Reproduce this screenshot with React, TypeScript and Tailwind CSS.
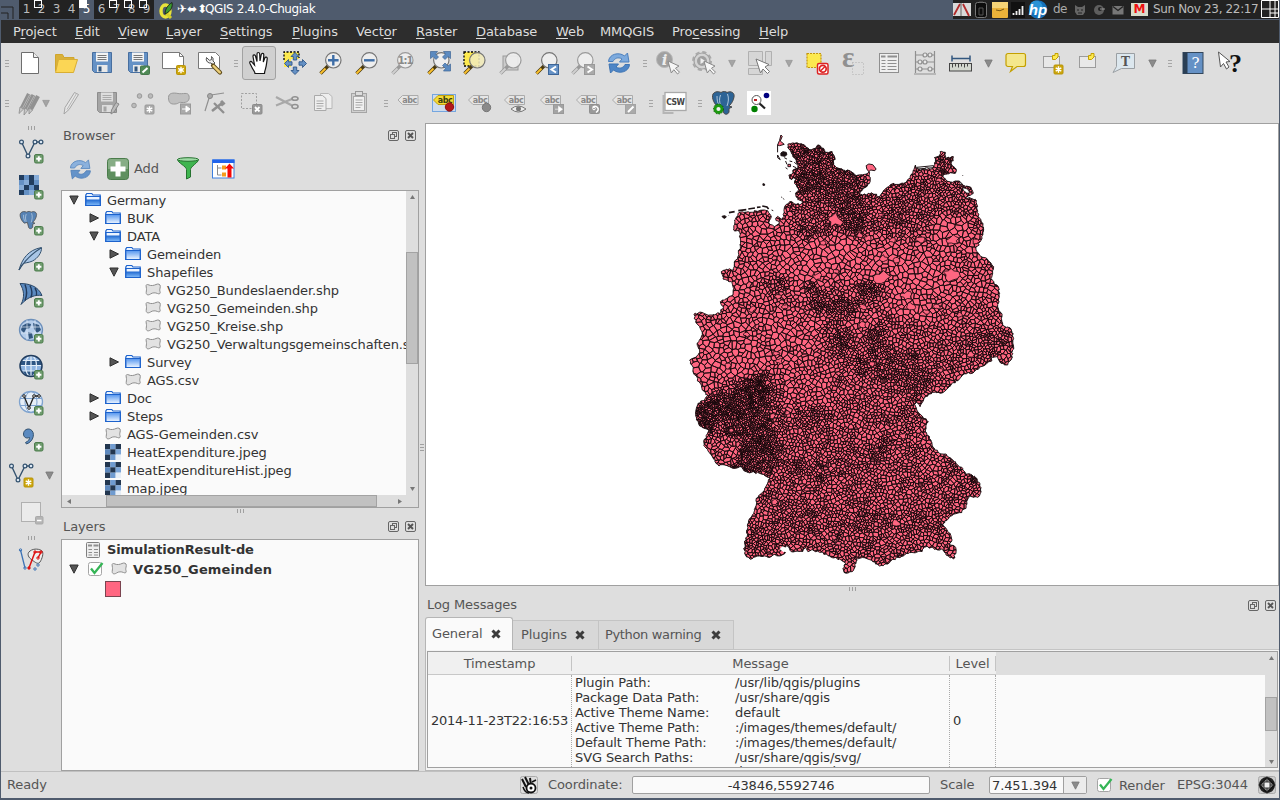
import React from "react";

/* ---------- map geometry ---------- */

const OUTLINE: number[] = [
  325,57,345,55,375,60,395,75,418,60,432,70,437,82,458,80,465,95,462,118,470,127,490,135,512,138,530,152,
  555,148,568,140,570,142,572,170,552,190,540,206,560,210,575,203,600,215,605,208,618,192,635,178,672,175,692,160,
  700,145,708,120,715,132,735,134,760,130,768,110,765,98,780,92,782,80,798,82,800,100,822,95,815,115,830,132,828,145,
  812,143,790,152,800,165,820,172,840,168,850,180,870,185,882,205,868,212,858,218,888,223,893,240,893,262,905,285,
  913,315,905,345,890,375,900,388,922,400,943,425,940,445,935,460,945,478,957,485,960,515,955,545,968,575,970,600,
  995,612,1003,640,1000,675,995,705,985,720,965,715,955,695,932,693,938,707,905,725,885,740,850,750,835,767,820,773,
  805,790,790,803,760,802,735,817,722,845,715,835,705,827,712,855,730,875,747,890,738,915,750,940,765,970,780,985,
  800,987,815,1000,850,1030,858,1047,885,1053,902,1075,903,1105,895,1117,870,1112,862,1130,860,1150,840,1163,810,1175,
  790,1197,812,1225,818,1245,810,1257,825,1263,830,1280,822,1302,800,1290,790,1273,775,1275,755,1267,735,1267,728,1280,
  690,1283,665,1295,640,1303,625,1317,600,1323,580,1310,560,1300,530,1300,530,1315,518,1340,500,1345,490,1330,
  498,1315,485,1305,455,1297,440,1287,420,1282,395,1275,385,1280,378,1264,370,1279,335,1280,320,1262,300,1275,318,1283,
  300,1293,280,1290,265,1297,240,1293,212,1303,195,1285,195,1255,203,1235,203,1200,218,1170,228,1145,230,1120,255,1095,
  272,1060,240,1045,200,1040,185,1025,160,1030,135,1020,118,1023,95,990,75,965,72,950,88,915,60,903,50,885,48,860,
  55,835,75,825,85,810,68,795,58,770,45,750,40,735,30,705,48,697,60,675,52,655,68,630,60,605,48,590,43,568,65,562,
  90,570,120,565,132,545,122,530,160,510,162,490,155,470,130,462,125,440,140,433,162,435,168,405,178,390,182,340,
  180,320,162,315,165,285,180,262,210,262,255,255,265,258,275,275,268,295,285,305,300,295,288,280,294,274,310,285,
  315,245,330,230,360,240,370,230,355,225,348,205,358,195,345,175,350,162,330,160,328,150,340,145,340,135,355,128,
  350,105,340,95,328,72,
];

/* cx, cy, rx, ry, spacing */
const ZONES: number[][] = [
  [240, 430, 130, 150, 11.5], [150, 690, 130, 120, 12.5], [330, 760, 130, 120, 10.5], [440, 390, 90, 80, 13],
  [610, 430, 110, 80, 13], [740, 480, 110, 110, 13], [820, 330, 60, 60, 13], [300, 590, 120, 90, 11.5],
  [900, 500, 60, 90, 10], [540, 560, 50, 80, 10], [850, 600, 110, 60, 9],
  [300, 480, 60, 14, 6.5], [400, 490, 30, 20, 4.8], [450, 550, 60, 26, 4.8], [560, 500, 40, 40, 5.2],
  [485, 640, 40, 40, 5.2], [600, 650, 40, 30, 5.2], [900, 655, 80, 40, 6.2],
  [640, 260, 80, 70, 6.8], [760, 220, 120, 60, 6.4], [870, 190, 40, 30, 5], [800, 120, 40, 40, 5],
  [405, 110, 75, 70, 4.3], [430, 190, 85, 60, 4.5], [500, 210, 60, 70, 4.5], [400, 255, 70, 40, 6.2], [515, 280, 45, 60, 4.7],
  [420, 320, 60, 20, 6], [640, 725, 70, 50, 4.9], [540, 700, 70, 40, 6], [700, 760, 60, 40, 5.8],
  [190, 860, 90, 80, 3.7], [235, 790, 36, 42, 3.2], [80, 870, 36, 42, 3.3], [240, 960, 60, 70, 3.8],
  [215, 1025, 60, 25, 4.2], [130, 985, 44, 36, 9], [400, 870, 55, 30, 5.2], [610, 970, 28, 22, 4.2],
  [700, 865, 45, 30, 5.4], [885, 1065, 20, 14, 3.4], [380, 1040, 60, 30, 6.2], [240, 1250, 50, 40, 6],
  [420, 1200, 120, 50, 6.8], [740, 1180, 80, 40, 6.8], [560, 1180, 60, 40, 6.6], [300, 860, 20, 80, 7],
];

/* larger municipalities: cx, cy, radius */
const CITIES: number[][] = [
  [465, 285, 26], [815, 448, 28], [605, 458, 26], [682, 512, 19], [692, 545, 16], [820, 345, 19], [412, 455, 15],
  [218, 552, 13], [295, 515, 12], [315, 545, 10], [724, 345, 15], [780, 165, 10], [145, 720, 14], [290, 685, 11],
  [298, 708, 11], [578, 716, 12], [874, 690, 13], [782, 735, 9], [280, 873, 10], [324, 863, 9], [155, 915, 8],
  [382, 1093, 9], [650, 1193, 14], [286, 1130, 11], [592, 975, 9], [465, 1238, 9], [362, 1183, 8], [670, 933, 11],
  [478, 1255, 9], [638, 1030, 8], [606, 270, 8], [745, 210, 6], [550, 545, 13], [548, 600, 12], [202, 628, 11],
  [840, 570, 9], [740, 560, 11], [770, 545, 11], [610, 400, 14], [650, 405, 12], [470, 440, 9], [232, 605, 9],
  [540, 330, 11], [565, 340, 12], [890, 350, 12], [640, 345, 10], [430, 355, 10],
];

const makeRandom = (seed: number) => () => {
  seed = (seed * 1664525 + 1013904223) >>> 0;
  return seed / 4294967296;
};

const hash = (a: number, b: number) => {
  let h = (a * 374761393 + b * 668265263) | 0;
  h = Math.imul(h ^ (h >>> 13), 1274126177);
  return ((h ^ (h >>> 16)) >>> 0) / 4294967296;
};

function noise(x: number, y: number): number {
  const i = Math.floor(x), j = Math.floor(y);
  const u = x - i, v = y - j;
  const a = hash(i, j) + (hash(i + 1, j) - hash(i, j)) * u;
  const b = hash(i, j + 1) + (hash(i + 1, j + 1) - hash(i, j + 1)) * u;
  return a + (b - a) * v;
}

function roughen(src: number[]): string {
  const rnd = makeRandom(77);
  const n = src.length / 2;
  let d = "";
  for (let i = 0; i < n; i++) {
    const x1 = src[2 * i], y1 = src[2 * i + 1];
    const j = (i + 1) % n;
    const x2 = src[2 * j], y2 = src[2 * j + 1];
    const len = Math.hypot(x2 - x1, y2 - y1);
    const parts = Math.max(1, Math.round(len / 6));
    for (let k = 0; k < parts; k++) {
      const t = k / parts;
      const a = k === 0 ? 0 : 6;
      const x = x1 + (x2 - x1) * t + (rnd() - 0.5) * a;
      const y = y1 + (y2 - y1) * t + (rnd() - 0.5) * a;
      d += (d ? "L" : "M") + x.toFixed(1) + " " + y.toFixed(1);
    }
  }
  return d + "Z";
}

function spacingAt(x: number, y: number): number {
  const wx = x + (noise(x / 22, y / 22) - 0.5) * 50;
  const wy = y + (noise(x / 22 + 90, y / 22) - 0.5) * 50;
  let r = 7.8;
  for (const z of ZONES) {
    const q = Math.hypot((wx - z[0]) / z[2], (wy - z[1]) / z[3]);
    if (q < 1.25) {
      const w = Math.min(1, (1.25 - q) / 0.4);
      r += (z[4] - r) * w;
    }
  }
  return r * (0.55 + noise(x / 11 + 300, y / 11) * 0.95);
}

function buildCells(): string {
  const rnd = makeRandom(4242);
  const G = 12;
  const X0 = 20, Y0 = 45, W = 1000, H = 1310;
  const cols = Math.ceil(W / G), rows = Math.ceil(H / G);
  const grid: number[][] = Array.from({ length: cols * rows }, () => []);
  const px: number[] = [], py: number[] = [];
  const around = (x: number, y: number, rad: number, fn: (i: number) => boolean) => {
    const c0 = Math.max(0, Math.floor((x - rad - X0) / G)), c1 = Math.min(cols - 1, Math.floor((x + rad - X0) / G));
    const r0 = Math.max(0, Math.floor((y - rad - Y0) / G)), r1 = Math.min(rows - 1, Math.floor((y + rad - Y0) / G));
    for (let r = r0; r <= r1; r++)
      for (let c = c0; c <= c1; c++)
        for (const i of grid[r * cols + c]) if (fn(i)) return true;
    return false;
  };
  for (let k = 0; k < 130000; k++) {
    const x = X0 + rnd() * W, y = Y0 + rnd() * H;
    const r = spacingAt(x, y) * (0.88 + rnd() * 0.3);
    if (around(x, y, r, (i) => Math.hypot(px[i] - x, py[i] - y) < r)) continue;
    grid[Math.floor((y - Y0) / G) * cols + Math.floor((x - X0) / G)].push(px.length);
    px.push(x); py.push(y);
  }
  const out: string[] = [];
  for (let i = 0; i < px.length; i++) {
    const x = px[i], y = py[i];
    const b = spacingAt(x, y) * 1.6 + 5;
    let poly = [[-b, -b], [b, -b], [b, b], [-b, b]];
    const near: number[][] = [];
    around(x, y, b * 1.8, (j) => {
      if (j !== i) {
        const dx = px[j] - x, dy = py[j] - y;
        near.push([dx, dy, dx * dx + dy * dy]);
      }
      return false;
    });
    near.sort((p, q) => p[2] - q[2]);
    for (const [dx, dy, d2] of near) {
      let far = 0;
      for (const p of poly) far = Math.max(far, p[0] * p[0] + p[1] * p[1]);
      if (d2 > far * 4) break;
      const next: number[][] = [];
      for (let a = 0; a < poly.length; a++) {
        const p = poly[a], q = poly[(a + 1) % poly.length];
        const sp = p[0] * dx + p[1] * dy - d2 / 2, sq = q[0] * dx + q[1] * dy - d2 / 2;
        if (sp <= 0) next.push(p);
        if (sp <= 0 !== sq <= 0) {
          const t = sp / (sp - sq);
          next.push([p[0] + (q[0] - p[0]) * t, p[1] + (q[1] - p[1]) * t]);
        }
      }
      poly = next;
    }
    if (poly.length > 2) {
      const warped = poly.map((p) => {
        const vx = p[0] + x, vy = p[1] + y;
        return (vx + (noise(vx / 6, vy / 6) - 0.5) * 7).toFixed(1) + " " + (vy + (noise(vx / 6 + 50, vy / 6 + 50) - 0.5) * 7).toFixed(1);
      });
      out.push("M" + warped.join("L") + "Z");
    }
  }
  return out.join("");
}

function cityPath(): string {
  const rnd = makeRandom(9);
  return CITIES.map(([x, y, r]) => {
    const n = 11;
    const rot = rnd() * 6;
    let d = "";
    for (let k = 0; k < n; k++) {
      const a = (k / n) * Math.PI * 2 + rot;
      const q = r * (0.5 + rnd() * 0.65);
      d += (k ? "L" : "M") + (x + Math.cos(a) * q).toFixed(1) + " " + (y + Math.sin(a) * q * 0.8).toFixed(1);
    }
    return d + "Z";
  }).join("");
}

const outlinePath = roughen(OUTLINE);
const cellPath = buildCells();
const cities = cityPath();

function GermanyMap() {
  return (
    <svg className="block h-full w-full" viewBox="-762 -3 2559 1383" preserveAspectRatio="none">
      <defs>
        <clipPath id="land"><path d={outlinePath} /></clipPath>
      </defs>
      <g clipPath="url(#land)">
        <rect x="0" y="0" width="1100" height="1380" fill="#ff6681" />
        <path d={cellPath} fill="none" stroke="#1a0a0e" strokeWidth="2.6" />
        <path d={cities} fill="#ff6681" stroke="#1a0a0e" strokeWidth="2.5" />
      </g>
      <path d={outlinePath} fill="none" stroke="#1c1214" strokeWidth="2.8" />
      <g fill="#ff6681" stroke="#1c1214" strokeWidth="3">
        <path d="M560 122L568 117L580 119L590 132L586 137L574 135L568 140L562 132Z" />
        <path d="M304 30L308 34L302 48L314 58L300 62L294 60L300 46Z" />
        <path d="M294 60V82M294 90L302 104L294 98ZM712 127L762 122L763 128L716 132Z" fill="none" />
        <path d="M325 118l8 0 0 7-8 0Z" />
      </g>
      <g fill="#1c1214" stroke="#1c1214" strokeWidth="3">
        <path d="M304 84l6-4 10 2 2 7-6 5-12-2Z M314 98l8 4 M318 108l4 10 M330 108l8 2 M318 128l6 4 M344 112l8 6 M340 124l10 4 M250 176l5 1 0 4-5 0Z M305 216l3 2 M311 221l3 2 M332 198v2 M850 150v2 M276 255l5 2" />
        <path d="M127 274l8-2 5 3-4 5-6-2Z M147 272v1" />
        <path d="M148 263L165 260M176 257L200 254M206 252L226 249M232 247L243 246M248 243L262 246L267 252" strokeWidth="5" fill="none" />
      </g>
      <g fill="#fff" stroke="#1c1214" strokeWidth="2">
        <path d="M850 188l14 4 8 12-10 0-10-8Z M738 128l8 0 0 5-8 0Z M843 172l5 5-8 1Z" />
        <path d="M300 1272l8-8 12 4 6 8-14 6Z" stroke="none" />
      </g>
    </svg>
  );
}

/* ---------- icons ---------- */

type P = { children?: React.ReactNode; w?: number; h?: number };
const Ic = ({ children, w = 24, h = 24 }: P) => (
  <svg width={w} height={h} viewBox={`0 0 ${w} ${h}`} className="block shrink-0 overflow-visible tracking-normal" fill="none">
    {children}
  </svg>
);

const Plus = () => (
  <g>
    <rect x="15.500" y="15.500" width="8.500" height="8.500" rx="1.500" fill="#6f9b6e" stroke="#4b7c4b" />
    <path d="M19.800 17.200v5.200M17.200 19.800h5.200" stroke="#fff" strokeWidth="1.900" />
  </g>
);
const Star = ({ x = 14, y = 14, g = false }: { x?: number; y?: number; g?: boolean }) => (
  <g transform={`translate(${x} ${y})`}>
    <rect x=".5" y=".5" width="9" height="9" rx="1" fill={g ? "#a9a9a9" : "#cda60b"} stroke={g ? "#9b9b9b" : "#b8940a"} />
    <path d="M5 1.800v6.400M2.200 3.400l5.600 3.200M7.800 3.400L2.200 6.600" stroke="#fff" strokeWidth="1.400" />
  </g>
);

const NewDoc = () => (
  <Ic><path d="M3.500 1.500h12l5 5v16h-17z" fill="#fff" stroke="#6e6e6e" /><path d="M15.500 1.500v5h5" fill="#eee" stroke="#6e6e6e" /></Ic>
);
const Open = () => (
  <Ic>
    <path d="M1.500 20V3.500h7l1.500 3h10V9" fill="#d9b13a" stroke="#d0a52c" />
    <path d="M1.500 21.500L4.500 8.500h19l-4 13z" fill="#fbd655" stroke="#d9ae33" />
  </Ic>
);
const Floppy = ({ g = false }: { g?: boolean }) => (
  <g>
    <path d="M2.500 1.500h19v20H4.500l-2-2z" fill={g ? "#a5a5a5" : "#6591c5"} stroke={g ? "#8d8d8d" : "#486f9f"} />
    <rect x="6" y="1.500" width="12" height="9" fill={g ? "#ddd" : "#f3f3f3"} />
    <path d="M7.500 4.500h9M7.500 6.500h9M7.500 8.500h9" stroke={g ? "#aaa" : "#777"} />
    <rect x="7" y="14" width="10.500" height="7" fill={g ? "#ddd" : "#e9e9e9"} />
    <rect x="8.500" y="15.500" width="3" height="5" fill={g ? "#a5a5a5" : "#33577f"} />
  </g>
);
const SaveAs = () => (
  <Ic><Floppy /><rect x="14.500" y="15" width="9" height="8.500" rx="1" fill="#4f8a56" stroke="#47774c" /><path d="M16.500 21.500l5-4.500" stroke="#fff" strokeWidth="2" /></Ic>
);
const Composer = () => (
  <Ic><path d="M.5 1.500h17l4 4v12H.5z" fill="#fff" stroke="#787878" /><path d="M17.500 1.500v4h4" stroke="#787878" /><Star x={14} y={14} /></Ic>
);
const Manager = () => (
  <Ic>
    <path d="M.5 1.500h17l4 4v12H.5z" fill="#fff" stroke="#787878" />
    <path d="M8.500 6.500a4 4 0 0 0 1 4.500 4 4 0 0 0 3.500 1l2 2 2-2-2-2a4 4 0 0 0-1.500-4.500l.3 3-2.300.8-1.500-1.300z" fill="#eee" stroke="#555" />
    <path d="M15 14.500l7 7" stroke="#5e4a1a" strokeWidth="4.200" strokeLinecap="round" />
    <path d="M15.500 15l6.300 6.300" stroke="#edd07a" strokeWidth="2.400" strokeLinecap="round" />
  </Ic>
);
const Hand = () => (
  <Ic>
    <path d="M8 22.500c0-2-1.500-3-2.500-5L3 12.500c-.8-2 1-2.800 2.200-1.200L7.500 14 6 5.500C5.800 3.500 8 3.200 8.500 5L10 10.500V3c0-2 2.500-2 2.700 0l.3 7 1.300-6.500c.4-1.800 2.600-1.400 2.500.4L16.300 11l1.500-4c.7-1.600 2.700-.9 2.400.8-.6 4-.7 7-1.700 10-.5 1.700-1 2.700-1 4.700z" fill="#fff" stroke="#151515" strokeWidth="1.200" />
  </Ic>
);
const Pan = () => (
  <Ic>
    <path d="M1 1h15v7H8v8H1z" fill="#fce94f" />
    <path d="M1 9V1h15v6" stroke="#000" strokeWidth="1.300" strokeDasharray="2 1.500" />
    <g fill="#6591c5" stroke="#2f5788" strokeWidth=".9">
      <path d="M12 1.500l4 4h-2.300v3.500h-3.400V5.500H8z" />
      <path d="M12 23.500l4-4h-2.300V16h-3.400v3.500H8z" />
      <path d="M1.500 12.500l4-4v2.300H9v3.400H5.500v2.300z" />
      <path d="M23.500 12.500l-4-4v2.300H16v3.400h3.500v2.300z" />
    </g>
  </Ic>
);
const Lens = ({ g = false, c = "#f0f0f0" }: { g?: boolean; c?: string }) => (
  <g>
    <path d="M9 15L1.500 22.500" stroke={g ? "#999" : "#4a3a10"} strokeWidth="3.400" />
    <path d="M6.500 17.500L1.500 22.500" stroke={g ? "#d0d0d0" : "#fbc02d"} strokeWidth="2" />
    <circle cx="14.300" cy="9.300" r="7.700" fill={c} fillOpacity=".88" stroke={g ? "#9a9a9a" : "#757575"} strokeWidth="1.200" />
  </g>
);
const ZoomIn = () => <Ic><Lens /><path d="M14.300 4v10.600M9 9.300h10.600" stroke="#3d6da6" strokeWidth="2.400" /></Ic>;
const ZoomOut = () => <Ic><Lens /><path d="M9 9.300h10.600" stroke="#3d6da6" strokeWidth="2.400" /></Ic>;
const ZoomOne = () => <Ic><Lens g /><text x="14" y="13" textAnchor="middle" fontSize="10" fontWeight="700" fill="#8a8a8a" fontFamily="DejaVu Sans" letterSpacing="-1.2">1:1</text></Ic>;
const ZoomFull = () => (
  <Ic>
    <Lens />
    <path d="M3.500.5h7L8.500 3l3 3-2.500 2.500-3-3-2.500 2z M23.500.5h-7l2 2.500-3 3L18 8.500l3-3 2.500 2z M23.500 20h-7l2-2.500-3-3L18 12l3 3 2.500-2z" fill="#5b8ac0" stroke="#3d6597" strokeWidth=".7" />
  </Ic>
);
const ZoomSel = () => <Ic><rect x="1" y="1" width="15" height="14" fill="#fce94f" stroke="#000" strokeWidth="1.300" strokeDasharray="2 1.500" /><Lens c="#f1ebb8" /></Ic>;
const ZoomLayer = () => <Ic><rect x="4" y="5" width="15" height="14" fill="#ccc" stroke="#9a9a9a" /><Lens g /></Ic>;
const ZoomLast = () => <Ic><Lens /><rect x="13.500" y="13.500" width="10" height="10" fill="#6591c5" stroke="#3d6597" /><path d="M21 15.500l-4.500 3 4.500 3" stroke="#fff" strokeWidth="2" /></Ic>;
const ZoomNext = () => <Ic><Lens g /><rect x="13.500" y="13.500" width="10" height="10" fill="#aaa" stroke="#999" /><path d="M16.500 15.500l4.500 3-4.500 3" stroke="#fff" strokeWidth="2" /></Ic>;
const Arrows = () => (
  <g>
    <path d="M1.500 10.500C2 3 12 .5 17.500 5l3-3 1.500 9h-9.500l2.500-3c-4-2.500-7.500-.5-9 2.500z" fill="#7daadd" stroke="#4b7fbd" />
    <path d="M22.500 13.500C22 21 12 23.500 6.500 19l-3 3L2 13h9.500L9 16c4 2.500 7.500.5 9-2.500z" fill="#4f86c6" stroke="#3f75b4" />
  </g>
);
const Refresh = () => <Ic><Arrows /></Ic>;
const Pointer = ({ x = 11, y = 10 }: { x?: number; y?: number }) => (
  <path transform={`translate(${x} ${y})`} d="M0 0l3.300 12 2.500-3.300L9.500 13l2-1.800-4-4L11 5z" fill="#f6f6f6" stroke="#8a8a8a" />
);
const Info = () => (
  <Ic><circle cx="8.500" cy="8.500" r="8" fill="#a0a0a0" stroke="#b8b8b8" /><text x="8.500" y="14" textAnchor="middle" fontSize="15" fontStyle="italic" fontWeight="700" fill="#eee" fontFamily="DejaVu Serif">i</text><Pointer x={12} y={10} /></Ic>
);
const Action = () => (
  <Ic><circle cx="10" cy="10" r="8" fill="#d4d4d4" stroke="#9f9f9f" strokeWidth="1.200" /><circle cx="10" cy="10" r="9" stroke="#a9a9a9" strokeWidth="2" strokeDasharray="4.200 2.870" /><circle cx="10" cy="10" r="5" fill="#a0a0a0" /><path d="M8.500 7l5 3-5 3z" fill="#eee" /><Pointer x={12} y={10} /></Ic>
);
const Select = () => (
  <Ic><path d="M.5.500h14v14H.5zM17.500.5h6v14h-6zM.5 17.500h14v6H.5z" fill="#d6d6d6" stroke="#b0b0b0" /><path d="M8 8l4.500 14 2.500-4 4.500 4.500 2-2-4.500-4.500 4-2.500z" fill="#fff" stroke="#777" /></Ic>
);
const Deselect = () => (
  <Ic><rect x="2" y="2.500" width="14" height="14" fill="#fce94f" stroke="#c4960d" strokeWidth="1.200" strokeDasharray="2 1" /><rect x="12.500" y="12.500" width="10.500" height="10.500" rx="1.500" fill="#fff" stroke="#dd2222" strokeWidth="1.500" /><circle cx="17.800" cy="17.800" r="3.400" stroke="#dd2222" strokeWidth="1.700" /><path d="M15.500 20l4.500-4.500" stroke="#dd2222" strokeWidth="1.500" /></Ic>
);
const Epsilon = () => (
  <Ic><text x="1" y="15.500" fontSize="29" fill="#909090" fontWeight="700" fontFamily="Liberation Serif">ε</text><rect x="11.500" y="11.500" width="11" height="12" stroke="#b0b0b0" strokeDasharray="1 2" /></Ic>
);
const TableIc = () => (
  <Ic><rect x="2.500" y="2.500" width="19" height="19" fill="#efefef" stroke="#8f8f8f" /><path d="M4 5.500h4.500M10.500 5.500h9.500" stroke="#8f8f8f" strokeWidth="2" /><path d="M4.500 9.500h4M4.500 12.500h4M4.500 15.500h4M4.500 18.500h4M10.500 9.500h9M10.500 12.500h9M10.500 15.500h9M10.500 18.500h9" stroke="#8f8f8f" /></Ic>
);
const Abacus = () => (
  <Ic><path d="M2.500 0v22M21.500 0v22M2.500 4h19M2.500 11h19M2.500 18h19M1 23h22" stroke="#8f8f8f" strokeWidth="1.200" /><g fill="#e8e8e8" stroke="#8f8f8f" strokeWidth="1.200"><circle cx="12" cy="4" r="2" /><circle cx="17" cy="4" r="2" /><circle cx="7" cy="11" r="2" /><circle cx="12" cy="11" r="2" /><circle cx="7" cy="18" r="2" /><circle cx="17" cy="18" r="2" /></g></Ic>
);
const Measure = () => (
  <Ic><path d="M3 7.500h18M3 4.500v6M21 4.500v6" stroke="#33577f" strokeWidth="1.500" /><rect x=".5" y="12.500" width="22" height="7.500" fill="#d3d7cf" stroke="#444" /><path d="M3.500 13v3.500M6.500 13v2.500M9.500 13v3.500M12.500 13v2.500M15.500 13v3.500M18.500 13v2.500" stroke="#444" /></Ic>
);
const Tip = () => (
  <Ic><path d="M4 2.500h15.500a2 2 0 0 1 2 2v9a2 2 0 0 1-2 2H13L6.500 20.500l2-5H4a2 2 0 0 1-2-2v-9a2 2 0 0 1 2-2z" fill="#f4e78c" stroke="#c4a000" strokeWidth="1.200" /></Ic>
);
const Bookmark = ({ star = false }: { star?: boolean }) => (
  <Ic><rect x="3.500" y="5.500" width="16" height="11" fill="#e8e8e8" stroke="#555" strokeDasharray="1 1" /><path d="M12.500 4.500v4h3l2.500-2.500V2.500h-3v2z" fill="#fce94f" stroke="#c4a000" />{star && <Star x={13.500} y={13.500} />}</Ic>
);
const TextAnn = () => (
  <Ic><path d="M4.500 2.500h18v15H9.500L1 21.500l3.500-6z" fill="#dce7ee" stroke="#9a9fa3" /><text x="13.500" y="14.500" textAnchor="middle" fontSize="12" fontWeight="700" fill="#555" fontFamily="DejaVu Serif">T</text></Ic>
);
const Help = () => (
  <Ic><rect x="2" y="1.500" width="20" height="21" fill="#6591c5" stroke="#33475c" /><rect x="2" y="1.500" width="4.500" height="21" fill="#2a3f55" /><text x="14.500" y="17" textAnchor="middle" fontSize="15" fill="#fff" fontFamily="DejaVu Serif">?</text></Ic>
);
const Whats = () => (
  <Ic><path d="M1.500 1l2 15 3-3.500L9.500 18l2.500-2-3-5 4-.5z" fill="#fff" stroke="#555" /><text x="18.500" y="21" textAnchor="middle" fontSize="26" fontWeight="700" fill="#111" fontFamily="Liberation Serif">?</text></Ic>
);

const Pencils = () => (
  <Ic><g stroke="#929292" strokeWidth="4.200"><path d="M12 3L5 17" /><path d="M16.500 4L9.500 18" /><path d="M21 5l-7 13" /></g><path d="M12.500 4L5 18M17 5l-7 13" stroke="#b5b5b5" /><g fill="#c8c8c8" stroke="#8b8b8b" strokeWidth=".8"><path d="M3 16l3.600 2L2 22.500z M7.500 17l3.600 2L7 24z M12 17l3.600 2L12 23z" /></g></Ic>
);
const Pencil = () => (
  <Ic><path d="M15.500 1.500l4 2-9.500 15-5 4.500 1-6.500z" fill="#e6e6e6" stroke="#a5a5a5" /><path d="M17.500 2.500L8 18.500" stroke="#b5b5b5" /></Ic>
);
const SaveEdit = () => <Ic><Floppy g /><path d="M21 11.500l3 1.500-5 8-3 2 .5-4z" fill="#bbb" stroke="#888" /></Ic>;
const AddFeat = () => (
  <Ic><g fill="#bbb" stroke="#999"><circle cx="8.500" cy="5" r="2.300" /><circle cx="19.500" cy="5" r="2.300" /><circle cx="3" cy="14.500" r="2.300" /></g><Star x={13.500} y={13.500} g /></Ic>
);
const MoveFeat = () => (
  <Ic><path d="M1.500 6.500C1.500 2 6 1.500 11 2.500s10-2 11 2.500-2 7-7 6.500-2 1-7 1.500-6.500-2-6.500-6.500z" fill="#c0c0c0" stroke="#999" /><rect x="13.500" y="13" width="10" height="10" fill="#aaa" stroke="#999" /><path d="M15 18h4v-3l4 3-4 3v-3" fill="#fff" stroke="#fff" /></Ic>
);
const NodeTool = () => (
  <Ic><path d="M7 4L2 20M8 4l13-2" stroke="#909090" strokeWidth="1.200" /><circle cx="7" cy="5" r="2.500" fill="#aaa" stroke="#888" /><path d="M9 20l9-7 2 1.500" stroke="#8f8f8f" strokeWidth="2.600" /><path d="M11 12l10 10" stroke="#8f8f8f" strokeWidth="2.300" /><path d="M18 10l3.500 3.500" stroke="#8f8f8f" strokeWidth="3" /></Ic>
);
const DelSel = () => (
  <Ic><rect x="2.500" y="2.500" width="15" height="15" stroke="#a0a0a0" strokeDasharray="2 1.500" /><rect x="13.500" y="13.500" width="9.500" height="9.500" rx="1" fill="#999" stroke="#8b8b8b" /><path d="M16 16l4.500 4.500M20.500 16L16 20.500" stroke="#fff" strokeWidth="1.800" /></Ic>
);
const Scissors = () => (
  <Ic><path d="M1 6l16 8.500M1 14.500l16-6.500" stroke="#a8a8a8" strokeWidth="2.200" /><ellipse cx="20" cy="7.500" rx="3" ry="1.800" stroke="#909090" strokeWidth="1.600" /><ellipse cx="20" cy="15.500" rx="3" ry="2" stroke="#909090" strokeWidth="1.600" /></Ic>
);
const CopyIc = () => (
  <Ic><path d="M9.500 2.500h8l3.500 3v12H9.500z" fill="#eee" stroke="#b8b8b8" /><path d="M3.500 4.500h8l3.500 3v12H3.500z" fill="#eee" stroke="#aaa" /><path d="M5.500 10h7M5.500 12.500h7M5.500 15h7M5.500 17.500h5" stroke="#aaa" /></Ic>
);
const Paste = () => (
  <Ic><rect x="4.500" y="2.500" width="15" height="19" fill="#d0d0d0" stroke="#a5a5a5" /><rect x="6.500" y="5.500" width="11" height="14" fill="#f0f0f0" stroke="#aaa" /><rect x="8.500" y=".5" width="7" height="4" fill="#ddd" stroke="#999" /><path d="M8.500 9h7M8.500 11.500h7M8.500 14h7M8.500 16.500h5" stroke="#aaa" /></Ic>
);
const Tag = ({ y = false, children, plain = false }: { y?: boolean; children?: React.ReactNode; plain?: boolean }) => (
  <Ic>
    {y && <rect x=".5" y="3.500" width="23" height="17" fill="#cfdcec" stroke="#74a6e0" />}
    <g transform={plain ? "translate(.5 0)" : y ? "translate(0 0)" : "translate(-1 0)"}>
      <path d="M1.500 9L6 4.500h15.500v9H6z" fill={y ? "#f4dc35" : "#e6e6e6"} stroke={y ? "#c0a010" : "#ababab"} />
      <text x="13" y="12" textAnchor="middle" fontSize="8" fontWeight="700" fill={y ? "#3c3c10" : "#888"} fontFamily="DejaVu Sans" letterSpacing="-.4">abc</text>
    </g>
    {children}
  </Ic>
);
const Csw = () => (
  <Ic><path d="M.5 4v18h10" stroke="#b5b5b5" strokeWidth="2" /><rect x="2" y="1.500" width="21" height="18" fill="#fff" stroke="#a9a9a9" strokeWidth="1.300" /><text x="12.300" y="13.500" textAnchor="middle" fontSize="8.500" fontWeight="700" fill="#444" fontFamily="DejaVu Sans Condensed, DejaVu Sans" letterSpacing="-.5">CSW</text></Ic>
);
const Elephant = ({ s = "#2d6496" }: { s?: string }) => (
  <g>
    <path d="M2 3C4 0 8 .5 10 1.500 12 0 15 .5 16 1.500 20-.5 24 2 23 6c-.5 3-2 6-4 8l-1 1 3 1-3 1.500v3.500c-1 3-5 3-5.500 0L11 15l-4 1C4 14 0 7 2 3z" fill={s} stroke="#4a4a4a" />
    <path d="M9.500 4c-1.500 4-1 7 0 10M16.500 3c1.500 4 1 8-.5 12M6 5c0 4 .5 7 2 9" stroke="#cfe0ee" strokeWidth=".8" />
  </g>
);
const PgTool = () => <Ic><Elephant /><circle cx="7.500" cy="18" r="3.500" fill="#eee" stroke="#1d9a10" strokeWidth="2.800" /><circle cx="7.500" cy="18" r="5" stroke="#0b5b05" strokeDasharray="1.500 1.500" /></Ic>;
const Finder = () => (
  <Ic><rect width="24" height="24" fill="#fff" /><circle cx="9.500" cy="9" r="4.500" stroke="#555" /><path d="M12.500 12.500l5.500 5" stroke="#222" strokeWidth="2.200" /><path d="M7 9h3" stroke="#b22" strokeWidth="2" /><circle cx="19.500" cy="4.500" r="2.800" fill="#00007f" /><circle cx="7.500" cy="18" r="3.200" fill="#008000" /></Ic>
);

const VNodes = () => (
  <g>
    <path d="M2.500 3L9 17 16 3h6" stroke="#34526f" strokeWidth="1.400" />
    <g fill="#dbe7f3" stroke="#34526f" strokeWidth="1.200"><circle cx="2.500" cy="3" r="1.900" /><circle cx="9" cy="17" r="1.900" /><circle cx="16" cy="3" r="1.900" /><circle cx="22" cy="3" r="1.900" /></g>
  </g>
);
const CHECKS = [
  "#213d5f", "#6591c5", "#213d5f", "#86acd8", "#6591c5", "#86acd8", "#213d5f", "#6591c5",
  "#86acd8", "#213d5f", "#6591c5", "#213d5f", "#213d5f", "#6591c5", "#86acd8", "#6591c5",
];
const AddVector = () => <Ic><VNodes /><Plus /></Ic>;
const AddRaster = () => (
  <Ic>{CHECKS.map((f, i) => <rect key={i} x={(i % 4) * 5} y={Math.floor(i / 4) * 5} width="5" height="5" fill={f} />)}<Plus /></Ic>
);
const AddPg = () => <Ic><g transform="scale(.76)"><Elephant s="#5682b4" /></g><Plus /></Ic>;
const AddLite = () => <Ic><path d="M0 23C3 12 9 3 22.500.5c.5 5-4 11-9 13.500-4 2-8 1.500-10 3z" fill="#a9c6e6" stroke="#34526f" /><path d="M0 23C6 13 12 7 22 1" stroke="#34526f" strokeWidth="1.200" /><Plus /></Ic>;
const AddSail = () => <Ic><path d="M1 .5c8 0 18 2 22 12-6-1-14 1-21 9C6 14 5 7 1 .5z" fill="#5b8ac0" stroke="#2b4868" /><path d="M6 1.500c2 5 2 11 0 16M11 2.500c2 4 2.500 8 1 12M16 5c2 3 2 5 1.500 7.500" stroke="#21395a" strokeWidth="1.400" /><Plus /></Ic>;
const AddWms = () => (
  <Ic><ellipse cx="12" cy="11" rx="11.500" ry="10.500" fill="#b5cdea" stroke="#6c8fba" strokeWidth="1.300" /><path d="M3 7l5-3 4 1-1 4-4 1-2 4-3-3zM14 4l6 2 2 5-4 3-3-4zM9 13l4 1 1 5-4 1z" fill="#33577f" /><path d="M2 8h20M2 14h20M8 1v20M16 1v20" stroke="#dfeaf6" strokeWidth=".7" /><Plus /></Ic>
);
const AddWcs = () => (
  <Ic><ellipse cx="12" cy="11" rx="11" ry="10.500" fill="#8db3e0" /><path d="M3 5h18l2 5.500H1zM3.500 16h17l-4.500 5H8z" fill="#2d5583" /><path d="M1 10.500h22M3 5.500h18M3.500 16h17M12 .5v21" stroke="#e2edf8" strokeWidth="1.200" /><ellipse cx="12" cy="11" rx="5.500" ry="10.500" stroke="#e2edf8" strokeWidth="1.200" /><ellipse cx="12" cy="11" rx="11" ry="10.500" stroke="#213d5f" strokeWidth="1.500" /><Plus /></Ic>
);
const AddWfs = () => (
  <Ic><ellipse cx="12" cy="11" rx="11.500" ry="10.500" fill="#e6eef7" stroke="#7fa3cf" strokeWidth="1.300" /><ellipse cx="12" cy="11" rx="6" ry="10.500" stroke="#7fa3cf" /><path d="M1 7.500h22M1 14.500h22" stroke="#7fa3cf" /><path d="M5 5l5 12 5-12h5" stroke="#222" strokeWidth="1.300" /><g fill="#fff" stroke="#222"><circle cx="5" cy="5" r="1.300" /><circle cx="10" cy="17" r="1.300" /><circle cx="15" cy="5" r="1.300" /><circle cx="20" cy="5" r="1.300" /></g><Plus /></Ic>
);
const AddCsv = () => <Ic><path d="M4.500 7c0-4 4-6 7-4.500 5 2.500 3.500 12-4 14.500l-1-1.500c3-1.500 4.500-3.500 4-5C7 12 4.500 10 4.500 7z" fill="#5b8ac0" stroke="#34526f" /><Plus /></Ic>;
const NewVector = () => <Ic><VNodes /><Star x={14.500} y={14.500} /></Ic>;
const RemoveLayer = () => <Ic><rect x="2.500" y=".5" width="19" height="19" fill="#ebebeb" stroke="#b0b0b0" /><rect x="16.500" y="14.500" width="7.500" height="7.500" rx="1" fill="#b5b5b5" stroke="#aaa" /><path d="M18 18.500h4.500" stroke="#fff" strokeWidth="1.500" /></Ic>;
const Topo = () => (
  <Ic><path d="M11 3c4-3 10-2 12 0s0 8-2 11-5 0-8-2-6-6-2-9z" fill="#eee" stroke="#555" /><path d="M1.500 2L6 20" stroke="#3d73b5" strokeWidth="1.300" /><path d="M10 20l6-16h6l-3 6" stroke="#d11" strokeWidth="1.500" /><g stroke="#3d73b5"><circle cx="1.500" cy="2" r="1.200" /><circle cx="6" cy="20" r="1.200" /><circle cx="16" cy="21" r="1.200" /><circle cx="19" cy="17" r="1.200" /></g><g stroke="#d11"><circle cx="10" cy="20" r="1.200" fill="#d11" /><circle cx="16" cy="4" r="1.200" /><circle cx="22" cy="4" r="1.200" /><circle cx="19" cy="10" r="1.200" /></g></Ic>
);

const Folder = ({ open = false }: { open?: boolean }) => (
  <Ic w={16} h={16}>
    <defs>
      <linearGradient id={open ? "fo" : "fc"} x1="0" y1="0" x2="0" y2="1">
        <stop offset="0" stopColor={open ? "#1d66cf" : "#5b9af0"} /><stop offset="1" stopColor={open ? "#7db8f8" : "#e6f1ff"} />
      </linearGradient>
    </defs>
    <path d="M.8 13.500V3l1-1.500h5L8 3h7.200v10.500z" fill="#eaf3ff" stroke="#1c62cc" strokeWidth="1.200" />
    {open ? <path d="M1 7.500h14v5.700H1z" fill="url(#fo)" /> : <path d="M1.500 5h13v8h-13z" fill="url(#fc)" />}
    <path d="M.8 4.500h14.500v9H.8z" stroke="#1c62cc" strokeWidth="1.200" />
  </Ic>
);
const Poly = () => (
  <Ic w={16} h={16}><path d="M1.200 5C.6 2.500 2 2 4 3s5 .5 7-.5 4.500-.5 4.300 2-1 3-.3 5-.5 3-2.500 2-5-1-7 .5-4.500 1-4.300-1.500S1.800 7.500 1.200 5z" fill="#e2e2e2" stroke="#8f8f8f" /></Ic>
);
const MINI = ["#22364f", "#6f9bd0", "#22364f", "#5d88bd", "#22364f", "#7ba5d8", "#22364f", "#6f9bd0", "#e6eef7"];
const MiniRaster = () => (
  <Ic w={16} h={16}>
    {MINI.map((f, i) => <rect key={i} x={(i % 3) * 5.300} y={Math.floor(i / 3) * 5.300} width="5.400" height="5.400" fill={f} />)}
  </Ic>
);
const MiniTable = () => (
  <Ic w={16} h={16}><rect x="1.500" y=".5" width="13" height="15" rx="1" fill="#eee" stroke="#7f7f7f" /><path d="M3 3.500h4M8.500 3.500h5" stroke="#8f8f8f" strokeWidth="2" /><path d="M3.500 7.500h3.500M3.500 10.500h3.500M3.500 13h3.500M9 7.500h4M9 10.500h4M9 13h4" stroke="#8f8f8f" /></Ic>
);
const Check = () => (
  <Ic w={18} h={16}><rect x="1.500" y="1.500" width="13" height="13" rx="2" fill="#fff" stroke="#a5a5a5" /><path d="M4 7.500l3.500 4.500L15.500 2" stroke="#35b556" strokeWidth="2.300" /></Ic>
);
const Tri = ({ open = false }: { open?: boolean }) => (
  <Ic w={10} h={10}><path d={open ? "M.8 1h8.400L5 9.200z" : "M1 .8v8.400L9.500 5z"} fill="#555" stroke="#2f2f2f" /></Ic>
);
const Drop = ({ small = false }: { small?: boolean }) => (
  <svg width={small ? 8 : 9} height="9" viewBox="0 0 9 9" className="shrink-0"><path d="M.8 1h7.400L4.500 8.200z" fill={small ? "#a5a5a5" : "#8b8b8b"} stroke={small ? "#909090" : "#777"} strokeWidth=".8" /></svg>
);
const DockBtns = () => (
  <div className="flex gap-[6px]">
    <Ic w={11} h={11}><rect x=".5" y=".5" width="10" height="10" rx="1.500" stroke="#666" /><rect x="4.500" y="2.500" width="4" height="4" stroke="#666" /><rect x="2.500" y="4.500" width="4" height="4" fill="#dedede" stroke="#666" /></Ic>
    <Ic w={11} h={11}><rect x=".5" y=".5" width="10" height="10" rx="1.500" stroke="#666" /><path d="M3 3l5 5M8 3L3 8" stroke="#555" strokeWidth="1.900" /></Ic>
  </div>
);
const TabX = () => <Ic w={10} h={10}><path d="M1.500 1.500l7 7M8.500 1.500l-7 7" stroke="#3c3c3c" strokeWidth="3" /></Ic>;

/* ---------- toolbars ---------- */

const Grip = ({ w, pad = "" }: { w: string; pad?: string }) => (
  <div className={`flex h-full shrink-0 flex-col items-center justify-center gap-[2px] ${w} ${pad}`}>
    <i className="h-px w-[4px] bg-[#a6a6a6]" /><i className="h-px w-[4px] bg-[#a6a6a6]" /><i className="h-px w-[4px] bg-[#a6a6a6]" />
  </div>
);
const VGrip = ({ cls = "" }: { cls?: string }) => (
  <div className={`flex shrink-0 items-center justify-center gap-[2px] ${cls}`}>
    <i className="h-[4px] w-px bg-[#a0a0a0]" /><i className="h-[4px] w-px bg-[#a0a0a0]" /><i className="h-[4px] w-px bg-[#a0a0a0]" />
  </div>
);
const Slot = ({ children, w = "w-9" }: { children: React.ReactNode; w?: string }) => (
  <div className={`flex shrink-0 items-center justify-center ${w}`}>{children}</div>
);
const Slots = ({ items }: { items: React.ComponentType[] }) => (
  <>{items.map((C, i) => <Slot key={i}><C /></Slot>)}</>
);
const VSlot = ({ children }: { children: React.ReactNode }) => (
  <div className="flex h-9 shrink-0 items-center pl-[18px]">{children}</div>
);

/* ---------- desktop bar ---------- */

const Ws = ({ n, badge = "", on = false }: { n: string; badge?: string; on?: boolean }) => (
  <div className={`relative flex h-[19px] w-[15px] shrink-0 items-center justify-center ${on ? "bg-[#4f5b6d] text-white" : "bg-[#222] text-[#bbb]"}`}>
    {n}
    {badge && <i className={`absolute left-0 top-0 h-2 w-2 border border-white ${badge === "full" ? "bg-white" : ""}`} />}
  </div>
);

const DesktopBar = () => (
  <div className="flex h-5 shrink-0 items-start bg-[#4f5b6d] text-[12px] leading-[19px] text-[#bbb]">
    <Ic w={19} h={19}><path d="M1 7h12v12M1 13h7v6" stroke="#222" /></Ic>
    <Ws n="1" /><Ws n="2" badge="open" /><Ws n="3" /><Ws n="4" /><Ws n="5" badge="full" on />
    <Ws n="6" /><Ws n="7" badge="open" /><Ws n="8" badge="open" /><Ws n="9" badge="open" />
    <div className="flex h-[19px] w-[23px] shrink-0 items-center justify-center">
      <Ic w={16} h={18}><ellipse cx="7.500" cy="10" rx="4.500" ry="6" stroke="#e8e23a" strokeWidth="3.400" /><path d="M8 12l5 5" stroke="#d6d02a" strokeWidth="3" /><path d="M7 13C7 8 10 4 14 1.500c1 4-1 9-7 11.500z" fill="#3c9a2e" stroke="#111" strokeWidth=".8" /></Ic>
    </div>
    <div className="flex w-[776px] shrink-0 whitespace-pre text-white"><span className="w-[28px] tracking-[-0.1px]">✈⬌⬍</span><span className="tracking-[-0.4px]">QGIS 2.4.0-Chugiak</span></div>
    <div className="flex h-[19px] w-[178px] shrink-0 items-center bg-[#222]">
      <div className="flex w-[95px] shrink-0 items-center">
        <Ic w={18} h={18}><rect y="2" width="18" height="13" fill="#d9d9d9" /><path d="M1 14L7 3M10 3l6 12" stroke="#b22a2a" strokeWidth="1.800" /><path d="M8 2v13" stroke="#666" /></Ic>
        <Ic w={20} h={18}><rect x="4.500" y="1.500" width="11" height="15" rx="2" fill="#0d0d0d" stroke="#777" /><path d="M8 1h4M8 7v7h4V7z" stroke="#555" /></Ic>
        <Ic w={19} h={18}><rect x="1" y="1" width="16" height="16" rx="1" fill="#eab23a" /><rect x="1" y="1" width="16" height="6" fill="#f6d477" /><path d="M5 9q4 2 8-1" stroke="#7a5a12" /></Ic>
        <Ic w={18} h={18}><rect x="1" y="1" width="14" height="16" fill="#111" /><path d="M3.500 14v-2M6.500 14v-4M9.500 14V8M12.500 14V5" stroke="#eee" strokeWidth="1.800" /></Ic>
        <Ic w={20} h={19}><circle cx="10" cy="9.500" r="9.300" fill="#1670b8" /><circle cx="8" cy="7" r="6.500" fill="#2a93d5" /><text x="10" y="14.500" textAnchor="middle" fontSize="15" fontStyle="italic" fontWeight="700" fill="#fff" fontFamily="Liberation Sans">hp</text></Ic>
      </div>
      <span className="w-[26px] shrink-0 pl-[5px] tracking-[-0.5px] text-[#aaa]">de</span>
      <div className="flex w-[57px] shrink-0 items-center gap-[7px]">
        <Ic w={12} h={12}><path d="M1 1l3 2h4l3-2v7l-2 3H3L1 8z" fill="#666" /><path d="M3 6h2M7 6h2M4 9h4" stroke="#222" /></Ic>
        <Ic w={12} h={12}><circle cx="6" cy="6" r="5" fill="#5e5e5e" /><circle cx="7" cy="5" r="2" fill="#222" /><path d="M7 5h5" stroke="#999" /></Ic>
        <Ic w={12} h={12}><rect x=".5" y="2" width="11" height="8.500" fill="#777" /><path d="M1 2.500l5 4 5-4" stroke="#222" strokeWidth="1.300" /></Ic>
      </div>
    </div>
    <div className="flex h-[19px] shrink-0 items-center bg-[#222]">
      <div className="flex h-[13px] w-[17px] shrink-0 items-center justify-center bg-[#d8dccb] text-[12px] font-bold text-[#e11]">M</div>
      <span className="w-[113px] shrink-0 whitespace-nowrap pl-[5px] tracking-[-0.35px]">Sun Nov 23, 22:17</span>
      <Ic w={18} h={19}><path d="M.5.5h17v17H.5zM9 .5v17M.5 9h17M14 9v8.500M9 13h9M14 .5V9" stroke="#fff" /></Ic>
    </div>
  </div>
);

/* label, index of the accelerator letter, width */
const MENUS: [string, number, string][] = [
  ["Project", 1, "w-[62px]"], ["Edit", 0, "w-[43px]"], ["View", 0, "w-[48px]"], ["Layer", 0, "w-[54px]"], ["Settings", 0, "w-[72px]"],
  ["Plugins", 0, "w-[64px]"], ["Vector", 4, "w-[60px]"], ["Raster", 0, "w-[60px]"], ["Database", 0, "w-[80px]"], ["Web", 0, "w-[44px]"],
  ["MMQGIS", -1, "w-[72px]"], ["Processing", 3, "w-[87px]"], ["Help", 0, "w-[40px]"],
];

/* ---------- browser tree ---------- */

type Row = [number, string, string, string];
const TREE: Row[] = [
  [0, "open", "fo", "Germany"], [1, "shut", "f", "BUK"], [1, "open", "fo", "DATA"], [2, "shut", "f", "Gemeinden"],
  [2, "open", "fo", "Shapefiles"], [3, "", "p", "VG250_Bundeslaender.shp"], [3, "", "p", "VG250_Gemeinden.shp"],
  [3, "", "p", "VG250_Kreise.shp"], [3, "", "p", "VG250_Verwaltungsgemeinschaften.shp"], [2, "shut", "f", "Survey"],
  [2, "", "p", "AGS.csv"], [1, "shut", "f", "Doc"], [1, "shut", "f", "Steps"], [1, "", "p", "AGS-Gemeinden.csv"],
  [1, "", "r", "HeatExpenditure.jpeg"], [1, "", "r", "HeatExpenditureHist.jpeg"], [1, "", "r", "map.jpeg"],
];
const INDENT = ["pl-[7px]", "pl-[27px]", "pl-[47px]", "pl-[67px]"];

const LOG = [
  ["Plugin Path:", "/usr/lib/qgis/plugins"], ["Package Data Path:", "/usr/share/qgis"], ["Active Theme Name:", "default"],
  ["Active Theme Path:", ":/images/themes/default/"], ["Default Theme Path:", ":/images/themes/default/"],
  ["SVG Search Paths:", "/usr/share/qgis/svg/"],
];

export default function App() {
  return (
    <div className="flex h-[800px] w-[1280px] flex-col overflow-hidden bg-[#4f5b6d] font-['DejaVu_Sans',sans-serif] text-[13px] tracking-[-0.1px] text-[#555]">
      <DesktopBar />
      <div className="mx-px flex h-[778px] flex-col bg-[#dedede]">
        <div className="flex h-[23px] shrink-0 items-center bg-[#2d2d2d] pl-3 text-[#dcdcdc]">
          {MENUS.map(([m, k, w]) => (
            <span key={m} className={`shrink-0 whitespace-nowrap ${w}`}>
              {k < 0 ? m : <>{m.slice(0, k)}<span className="underline underline-offset-2">{m[k]}</span>{m.slice(k + 1)}</>}
            </span>
          ))}
        </div>

        <div className="flex h-10 shrink-0 items-center">
          <Grip w="w-[11px]" />
          <Slots items={[NewDoc, Open, () => <Ic><Floppy /></Ic>, SaveAs, Composer, Manager]} />
          <Grip w="w-[13px]" pad="pl-[3px]" />
          <Slot><div className="flex h-[34px] w-[34px] items-center justify-center rounded-[3px] border border-[#a2a2a2] bg-[#d0d0d0]"><Hand /></div></Slot>
          <Slots items={[Pan, ZoomIn, ZoomOut, ZoomOne, ZoomFull, ZoomSel, ZoomLayer, ZoomLast, ZoomNext, Refresh]} />
          <Grip w="w-[13px]" pad="pl-[3px]" />
          <Slots items={[Info, Action]} />
          <Slot w="w-5"><Drop small /></Slot>
          <Slots items={[Select]} />
          <Slot w="w-[21px]"><Drop small /></Slot>
          <Slots items={[Deselect, Epsilon, TableIc, Abacus, Measure]} />
          <Slot w="w-[19px]"><Drop /></Slot>
          <Slots items={[Tip, () => <Bookmark star />, () => <Bookmark />, TextAnn]} />
          <Slot w="w-[21px]"><Drop /></Slot>
          <Grip w="w-[12px]" pad="pl-[2px]" />
          <Slots items={[Help, Whats]} />
        </div>

        <div className="flex h-10 shrink-0 items-center">
          <Grip w="w-[11px]" />
          <i className="w-1" />
          <Slot w="w-[26px]"><Pencils /></Slot>
          <Slot w="w-[11px]"><i className="-ml-[4px]"><Drop small /></i></Slot>
          <Slots items={[Pencil, SaveEdit, AddFeat, MoveFeat, NodeTool, DelSel, Scissors, CopyIc, Paste]} />
          <Grip w="w-[13px]" pad="pl-[4px]" />
          <Slot><Tag plain /></Slot>
          <Slot><Tag y><circle cx="17.500" cy="16" r="4.200" fill="#b31919" stroke="#8a1010" /></Tag></Slot>
          <Slot><Tag><circle cx="18.500" cy="16.500" r="4.200" fill="#8a8a8a" stroke="#777" /></Tag></Slot>
          <Slot><Tag><path d="M7 18q7-6 15 0-8 6-15 0z" fill="#eee" stroke="#777" /><circle cx="14.500" cy="17.800" r="2.500" fill="#777" /></Tag></Slot>
          <Slot><Tag><rect x="13.500" y="13.500" width="10" height="9" fill="#a3a3a3" stroke="#999" /><path d="M15 18.200h3.500v-3l4 3-4 3v-3" fill="#fff" stroke="#fff" strokeWidth=".6" /></Tag></Slot>
          <Slot><Tag><rect x="13.500" y="13.500" width="10" height="9" rx="1" fill="#999" stroke="#8f8f8f" /><path d="M16.500 16.500q3-2.500 5 0t-1.500 5" stroke="#fff" strokeWidth="1.500" /><circle cx="18" cy="17.500" r="1.300" stroke="#fff" /></Tag></Slot>
          <Slot><Tag><rect x="13.500" y="13.500" width="10" height="9" fill="#aaa" stroke="#a3a3a3" /><path d="M16 21l5.500-5.500" stroke="#fff" strokeWidth="2" /></Tag></Slot>
          <Grip w="w-[15px]" pad="pl-[3px]" />
          <Slot><Csw /></Slot>
          <Grip w="w-[12px]" pad="pl-[2px]" />
          <Slots items={[PgTool, Finder]} />
        </div>

        <div className="flex h-[648px] shrink-0">
          <div className="flex w-[60px] shrink-0 flex-col">
            <VGrip cls="h-[10px]" />
            <VSlot><AddVector /></VSlot><VSlot><AddRaster /></VSlot><VSlot><AddPg /></VSlot><VSlot><AddLite /></VSlot>
            <VSlot><AddSail /></VSlot><VSlot><AddWms /></VSlot><VSlot><AddWcs /></VSlot><VSlot><AddWfs /></VSlot><VSlot><AddCsv /></VSlot>
            <div className="flex h-9 shrink-0 items-center gap-[12px] pl-[8px]"><NewVector /><Drop /></div>
            <div className="flex h-[42px] shrink-0 items-center pl-[18px]"><RemoveLayer /></div>
            <VGrip cls="h-[6px]" />
            <div className="flex h-[37px] shrink-0 items-center pl-[18px]"><Topo /></div>
          </div>

          <div className="flex w-[358px] shrink-0 flex-col">
            <div className="flex h-[25px] shrink-0 items-center justify-between pl-[2px] pr-[3px]"><span>Browser</span><DockBtns /></div>
            <div className="flex h-[42px] shrink-0 items-center pl-[7px]">
              <Ic><g transform="translate(1 1) scale(.95)" opacity=".85"><Arrows /></g></Ic>
              <i className="w-[14px]" />
              <Ic><rect x="1.500" y="1.500" width="21" height="21" rx="3" fill="#5f905f" stroke="#4b7c4b" /><path d="M2 5a3 3 0 0 1 3-3h14a3 3 0 0 1 3 3v7H2z" fill="#86ad85" /><path d="M12 4.500v15M4.500 12h15" stroke="#fff" strokeWidth="5" /></Ic>
              <span className="w-[40px] pl-[4px]">Add</span>
              <i className="w-[6px]" />
              <Ic><path d="M1.500 2.500h21c0 3-8 7-8 10v7.500l-4 2v-9.500c0-3-9-7-9-10z" fill="#3fb54f" stroke="#25722f" /><ellipse cx="12" cy="2.500" rx="10.500" ry="1.800" fill="#9fdca6" stroke="#25722f" /></Ic>
              <i className="w-[12px]" />
              <Ic><rect x=".5" y="3" width="21.500" height="18" fill="#fff" stroke="#3c7fe0" /><rect x=".5" y="2.500" width="22" height="3.500" fill="#1f63ec" /><path d="M5.500 8v10M5.500 11h4M5.500 18h4" stroke="#8a8a8a" /><path d="M10 8.500h4v4h-4zM10 15.500h4v4h-4z" fill="#f59b1c" /><path d="M17.500 6.500l4.500 5h-2.500v9h-4v-9H13z" fill="#f50808" /></Ic>
            </div>
            <div className="flex h-[318px] shrink-0 flex-col border border-[#a0a0a0] bg-[#fafafa]">
              <div className="flex h-[304px] shrink-0">
                <div className="w-[344px] shrink-0 overflow-hidden text-[#333]">
                  {TREE.map(([lv, a, ic, t]) => (
                    <div key={t} className={`flex h-[18px] items-center whitespace-nowrap ${INDENT[lv]}`}>
                      <span className="flex w-4 shrink-0 items-center">{a && <Tri open={a === "open"} />}</span>
                      {ic === "fo" ? <Folder open /> : ic === "f" ? <Folder /> : ic === "p" ? <Poly /> : <MiniRaster />}
                      <span className="pl-[6px] pt-[2px]">{t}</span>
                    </div>
                  ))}
                </div>
                <div className="flex w-[12px] flex-col items-center bg-[#dedede] pt-[4px]">
                  <Ic w={5} h={5}><path d="M0 4h5L2.500 0z" fill="#777" /></Ic>
                  <div className="mt-[52px] h-[112px] w-full border border-[#a3a3a3] bg-[#c1c1c1]" />
                  <i className="h-[122px]" />
                  <Ic w={5} h={5}><path d="M0 1h5L2.500 5z" fill="#777" /></Ic>
                </div>
              </div>
              <div className="flex h-[12px] items-center bg-[#dedede]">
                <span className="flex w-[44px] pl-[5px]"><Ic w={4} h={5}><path d="M4 0v5L0 2.500z" fill="#777" /></Ic></span>
                <div className="h-[12px] w-[271px] border border-[#a3a3a3] bg-[#c1c1c1]" />
                <i className="w-[21px]" />
                <Ic w={4} h={5}><path d="M0 0v5l4-2.500z" fill="#777" /></Ic>
              </div>
            </div>
            <VGrip cls="h-[6px]" />
            <div className="flex h-[25px] shrink-0 items-center justify-between pl-[2px] pr-[3px]"><span>Layers</span><DockBtns /></div>
            <div className="h-[232px] border border-[#a0a0a0] bg-[#fafafa] font-bold text-[#333]">
              <div className="flex h-[19px] items-center pl-[23px]"><MiniTable /><span className="pl-[6px] pt-px tracking-[-0.1px]">SimulationResult-de</span></div>
              <div className="flex h-[20px] items-center pl-[7px]"><Tri open /><i className="w-[8px]" /><Check /><i className="w-[6px]" /><Poly /><span className="pl-[6px] pt-px tracking-[0.12px]">VG250_Gemeinden</span></div>
              <div className="flex h-[20px] items-center pl-[43px]"><div className="h-4 w-4 border border-[#7a4450] bg-[#ff6681]" /></div>
            </div>
          </div>

          <div className="flex w-[6px] shrink-0 flex-col items-center justify-center gap-[2px]">
            <i className="h-px w-[4px] bg-[#a0a0a0]" /><i className="h-px w-[4px] bg-[#a0a0a0]" /><i className="h-px w-[4px] bg-[#a0a0a0]" />
          </div>

          <div className="flex min-w-0 flex-1 flex-col">
            <div className="h-[463px] shrink-0 border border-[#a0a0a0] bg-white"><GermanyMap /></div>
            <VGrip cls="h-[6px]" />
            <div className="flex h-[26px] shrink-0 items-center justify-between pl-[2px] pr-[3px]"><span>Log Messages</span><DockBtns /></div>
            <div className="flex h-[32px] shrink-0 items-end">
              <div className="flex h-[33px] w-[88px] shrink-0 items-center gap-[8px] rounded-t-[3px] border border-b-0 border-[#b5b5b5] bg-[#fafafa] pl-[6px]"><span className="w-[51px]">General</span><TabX /></div>
              <div className="flex h-[30px] w-[86px] shrink-0 items-center gap-[8px] border border-l-0 border-[#c4c4c4] bg-[#d8d8d8] pl-[8px]"><span className="w-[46px]">Plugins</span><TabX /></div>
              <div className="flex h-[30px] w-[135px] shrink-0 items-center gap-[8px] border border-l-0 border-[#c4c4c4] bg-[#d8d8d8] pl-[6px]"><span className="w-[98px] whitespace-nowrap tracking-[-0.35px]">Python warning</span><TabX /></div>
              <div className="h-px flex-1 bg-[#c4c4c4]" />
            </div>
            <div className="flex h-[121px] shrink-0 border-b border-l border-[#b8b8b8] bg-[#f4f4f4] px-px pb-[2px] pt-px">
              <div className="flex flex-1 flex-col overflow-hidden border border-[#a0a0a0] bg-[#fafafa]">
                <div className="flex h-[117px]">
                  <div className="flex flex-1 flex-col overflow-hidden">
                    <div className="flex h-[23px] shrink-0 items-center bg-[#dedede]">
                      <div className="flex h-full w-[143px] items-center justify-center border-b border-[#c8c8c8] bg-[#f0f0f0] pt-px">Timestamp</div>
                      <div className="flex h-full w-[378px] items-center border-b border-[#c8c8c8] bg-[#f0f0f0]"><i className="h-[15px] w-px bg-[#c4c4c4]" /><span className="flex-1 pt-px text-center">Message</span></div>
                      <div className="flex h-full w-[47px] items-center border-b border-[#c8c8c8] bg-[#f0f0f0]"><i className="h-[15px] w-px bg-[#c4c4c4]" /><span className="flex-1 pt-px text-center">Level</span><i className="h-[15px] w-px bg-[#c4c4c4]" /></div>
                    </div>
                    <div className="flex h-[92px] overflow-hidden text-[#333]">
                      <div className="flex w-[144px] shrink-0 items-center whitespace-nowrap border-r border-dotted border-[#aaa] pl-[3px] tracking-[-0.25px]">2014-11-23T22:16:53</div>
                      <div className="w-[378px] shrink-0 border-r border-dotted border-[#aaa] pl-[3px]">
                        {LOG.map(([a, b], i) => (
                          <div key={i} className="flex h-[15px] items-center leading-[15px]"><span className="w-[160px] whitespace-nowrap">{a}</span><span className="whitespace-nowrap">{b}</span></div>
                        ))}
                        <div className="h-[2px] overflow-hidden pl-[160px] leading-[13px]">/home/user/.qgis2/</div>
                      </div>
                      <div className="flex w-[46px] shrink-0 items-center border-r border-dotted border-[#aaa] pl-[3px]">0</div>
                    </div>
                  </div>
                  <div className="flex w-[12px] flex-col items-center bg-[#dedede] pt-[4px]">
                    <Ic w={5} h={5}><path d="M0 4h5L2.500 0z" fill="#777" /></Ic>
                    <div className="mt-[36px] h-[34px] w-full border border-[#a3a3a3] bg-[#c1c1c1]" />
                    <i className="h-[28px]" />
                    <Ic w={5} h={5}><path d="M0 1h5L2.500 5z" fill="#777" /></Ic>
                  </div>
                </div>
              </div>
            </div>
          </div>
        </div>

        <div className="flex h-[27px] shrink-0 items-center border-t border-[#c0c0c0] pl-[6px]">
          <span className="w-[513px]">Ready</span>
          <Ic w={18} h={18}><rect x=".5" y=".5" width="17" height="17" rx="2" fill="#ddd" stroke="#aaa" /><path d="M2 3l4 8M5 1l4 8M10 2l1 7" stroke="#111" strokeWidth="2" /><circle cx="11" cy="12" r="4.500" fill="#fff" stroke="#111" strokeWidth="1.800" /><circle cx="11" cy="12" r="1.500" fill="#111" /><path d="M3 11q2 6 6 6M12 6l4-2" stroke="#111" strokeWidth="1.500" /></Ic>
          <span className="w-[94px] pl-[10px]">Coordinate:</span>
          <div className="flex h-[18px] w-[298px] items-center justify-center rounded-[2px] border border-[#a0a0a0] bg-[#fafafa] pt-px text-[#333]">-43846,5592746</div>
          <span className="w-[59px] pl-[10px]">Scale</span>
          <div className="flex h-[18px] w-[98px] rounded-[2px] border border-[#a0a0a0] bg-[#fafafa] text-[#333]">
            <div className="flex w-[74px] items-center border-r border-[#a0a0a0] pl-[2px] pt-px">7.451.394</div>
            <div className="flex flex-1 items-center justify-center bg-[#ececec]"><Drop /></div>
          </div>
          <i className="w-[9px]" />
          <Check />
          <span className="w-[63px] pl-[5px] pt-px">Render</span>
          <span className="w-[81px] whitespace-nowrap">EPSG:3044</span>
          <Ic w={18} h={18}><rect x=".5" y=".5" width="17" height="17" rx="2" fill="#ccc" stroke="#aaa" /><circle cx="9" cy="9" r="7" fill="#999" stroke="#222" strokeWidth="2" /><path d="M9 1.500L16.500 9 9 16.500 1.500 9z" stroke="#111" strokeWidth="1.600" /><path d="M9 1v16M1 9h16" stroke="#333" /><rect x="6" y="6" width="6" height="6" fill="#eee" stroke="#333" /></Ic>
        </div>
      </div>
    </div>
  );
}
